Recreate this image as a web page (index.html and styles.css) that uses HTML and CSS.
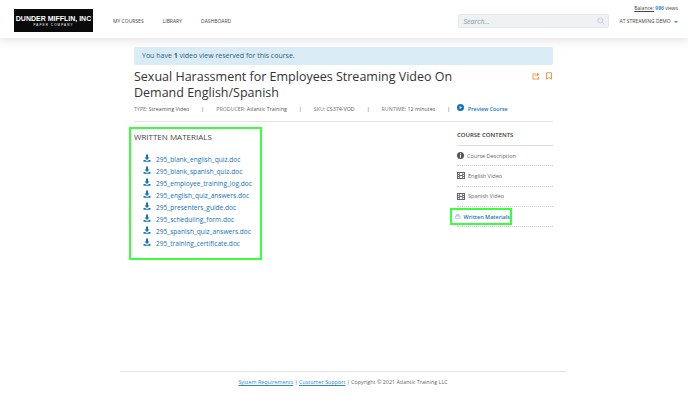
FILE: index.html
```html
<!DOCTYPE html>
<html lang="en">
<head>
  <meta charset="UTF-8" />
  <title>Sexual Harassment for Employees Streaming Video On Demand</title>
  <link rel="stylesheet" href="styles.css">
</head>
<body>

<header class="topbar">
  <div class="logo">
    <span class="logo-name">DUNDER MIFFLIN, INC</span>
    <span class="logo-sub">PAPER COMPANY</span>
  </div>
  <nav class="nav">
    <a href="#">MY COURSES</a>
    <a href="#">LIBRARY</a>
    <a href="#">DASHBOARD</a>
  </nav>
  <div class="topbar-right">
    <div class="balance"><u>Balance:</u> <b>986</b> views</div>
    <div class="topbar-tools">
      <div class="search">
        <span>Search...</span>
        <svg viewBox="0 0 16 16" width="8" height="8" fill="none" stroke="#b9c2c9" stroke-width="1.4"><circle cx="6.5" cy="6.5" r="5"/><path d="M10.5 10.5 15 15"/></svg>
      </div>
      <div class="account">AT STREAMING DEMO <i class="caret"></i></div>
    </div>
  </div>
</header>

<main class="content">
  <div class="alert">You have <b>1</b> video view reserved for this course.</div>

  <div class="title-row">
    <h1>Sexual Harassment for Employees Streaming Video On Demand English/Spanish</h1>
    <div class="title-icons">
      <svg viewBox="0 0 16 16" width="8" height="8" fill="#f0994a"><path d="M1 3h7v2H3v8h9v-3h2v5H1z"/><path d="M10 1l5 4-5 4V7C8 7 6.500 8 6 10c0-3 1-5 4-5.500z"/></svg>
      <svg viewBox="0 0 16 16" width="8" height="8" fill="none" stroke="#f0994a" stroke-width="2"><path d="M3 1.500h10v13L8 11l-5 3.500z"/></svg>
    </div>
  </div>

  <div class="meta">
    <span><em>TYPE:</em> Streaming Video</span>
    <span class="sep">|</span>
    <span><em>PRODUCER:</em> Atlantic Training</span>
    <span class="sep">|</span>
    <span><em>SKU:</em> CS374-VOD</span>
    <span class="sep">|</span>
    <span><em>RUNTIME:</em> 12 minutes</span>
    <span class="sep">|</span>
    <a class="preview" href="#">
      <svg viewBox="0 0 16 16" width="7" height="7"><circle cx="8" cy="8" r="8" fill="#1573b9"/><path d="M6 4.500 11.500 8 6 11.500z" fill="#fff"/></svg>
      Preview Course
    </a>
  </div>

  <div class="columns">
    <section class="materials">
      <h2>WRITTEN MATERIALS</h2>
      <ul class="files">
        <li><svg class="dl" viewBox="0 0 16 16"><path d="M6 1h4v6h3l-5 5-5-5h3z"/><path d="M1 12h3l2 1.500h4l2-1.500h3v3.500H1z"/></svg><a href="#">295_blank_english_quiz.doc</a></li>
        <li><svg class="dl" viewBox="0 0 16 16"><path d="M6 1h4v6h3l-5 5-5-5h3z"/><path d="M1 12h3l2 1.500h4l2-1.500h3v3.500H1z"/></svg><a href="#">295_blank_spanish_quiz.doc</a></li>
        <li><svg class="dl" viewBox="0 0 16 16"><path d="M6 1h4v6h3l-5 5-5-5h3z"/><path d="M1 12h3l2 1.500h4l2-1.500h3v3.500H1z"/></svg><a href="#">295_employee_training_log.doc</a></li>
        <li><svg class="dl" viewBox="0 0 16 16"><path d="M6 1h4v6h3l-5 5-5-5h3z"/><path d="M1 12h3l2 1.500h4l2-1.500h3v3.500H1z"/></svg><a href="#">295_english_quiz_answers.doc</a></li>
        <li><svg class="dl" viewBox="0 0 16 16"><path d="M6 1h4v6h3l-5 5-5-5h3z"/><path d="M1 12h3l2 1.500h4l2-1.500h3v3.500H1z"/></svg><a href="#">295_presenters_guide.doc</a></li>
        <li><svg class="dl" viewBox="0 0 16 16"><path d="M6 1h4v6h3l-5 5-5-5h3z"/><path d="M1 12h3l2 1.500h4l2-1.500h3v3.500H1z"/></svg><a href="#">295_scheduling_form.doc</a></li>
        <li><svg class="dl" viewBox="0 0 16 16"><path d="M6 1h4v6h3l-5 5-5-5h3z"/><path d="M1 12h3l2 1.500h4l2-1.500h3v3.500H1z"/></svg><a href="#">295_spanish_quiz_answers.doc</a></li>
        <li><svg class="dl" viewBox="0 0 16 16"><path d="M6 1h4v6h3l-5 5-5-5h3z"/><path d="M1 12h3l2 1.500h4l2-1.500h3v3.500H1z"/></svg><a href="#">295_training_certificate.doc</a></li>
      </ul>
    </section>

    <aside class="contents">
      <h3>COURSE CONTENTS</h3>
      <div class="item">
        <svg viewBox="0 0 16 16" width="7" height="7"><circle cx="8" cy="8" r="8" fill="#555"/><rect x="6.800" y="7" width="2.400" height="6" fill="#fff"/><rect x="6.800" y="3" width="2.400" height="2.400" fill="#fff"/></svg>
        Course Description
      </div>
      <div class="item">
        <svg viewBox="0 0 16 14" width="8" height="7"><path fill="#666" fill-rule="evenodd" d="M0 0h16v14H0zM2 2v2h2V2zm0 4v2h2V6zm0 4v2h2v-2zm10-8v2h2V2zm0 4v2h2V6zm0 4v2h2v-2zM5.500 2v4h5V2zm0 6v4h5V8z"/></svg>
        English Video
      </div>
      <div class="item">
        <svg viewBox="0 0 16 14" width="8" height="7"><path fill="#666" fill-rule="evenodd" d="M0 0h16v14H0zM2 2v2h2V2zm0 4v2h2V6zm0 4v2h2v-2zm10-8v2h2V2zm0 4v2h2V6zm0 4v2h2v-2zM5.500 2v4h5V2zm0 6v4h5V8z"/></svg>
        Spanish Video
      </div>
      <div class="item current">
        <span class="current-box">
          <svg viewBox="0 0 16 14" width="8" height="7" fill="none" stroke="#4a9ad4" stroke-width="1.200"><path d="M1 6h14v7H1zM4 6V3h8v3M6 3V1h4v2"/></svg>
          Written Materials
        </span>
      </div>
    </aside>
  </div>
</main>

<footer class="footer">
  <a href="#">System Requirements</a> | <a href="#">Customer Support</a> | Copyright © 2021 Atlantic Training LLC
</footer>

</body>
</html>
```

FILE: styles.css
```css
body {
  font-family: "Open Sans", sans-serif;
  background: #fff;
  color: #555;
  margin: 0;
  height: 405px;
  overflow: hidden;
}

a {
  color: #1573b9;
  text-decoration: none;
}

.topbar {
  height: 38px;
  display: flex;
  align-items: flex-start;
  padding: 0 10px 0 14px;
  box-shadow: 0 2px 10px rgba(0,0,0,0.12);
  box-sizing: border-box;
}

.logo {
  width: 79px;
  height: 23px;
  margin-top: 9px;
  background: #0a0a0a;
  color: #fff;
  display: flex;
  flex-direction: column;
  align-items: center;
  justify-content: center;
  font-family: "Liberation Sans", sans-serif;
  flex-shrink: 0;
}

.logo-name {
  font-size: 7px;
  font-weight: bold;
  line-height: 9px;
  white-space: nowrap;
}

.logo-sub {
  font-size: 3px;
  letter-spacing: 1.1px;
  line-height: 5px;
}

.nav {
  display: flex;
  gap: 19px;
  margin: 18px 0 0 20px;
  font-size: 5px;
  line-height: 7px;
}

.nav a {
  color: #444;
}

.topbar-right {
  margin-left: auto;
  display: flex;
  flex-direction: column;
  align-items: flex-end;
}

.balance {
  font-size: 5px;
  line-height: 7px;
  margin-top: 5px;
  color: #444;
}

.balance b {
  color: #3b8fd0;
}

.topbar-tools {
  display: flex;
  align-items: center;
  margin-top: 2px;
}

.search {
  width: 141px;
  height: 12px;
  background: #eef2f5;
  border: 1px solid #e2e7ea;
  border-radius: 2px;
  display: flex;
  align-items: center;
  justify-content: space-between;
  padding: 0 3px 0 5px;
  font-size: 7px;
  font-style: italic;
  color: #8a949b;
  box-sizing: content-box;
  margin-right: 11px;
}

.search span {
  margin-right: auto;
}

.account {
  font-size: 5px;
  color: #444;
  white-space: nowrap;
}

.caret {
  display: inline-block;
  border: 2px solid transparent;
  border-top-color: #3b8fd0;
  border-bottom: 0;
  margin-left: 2px;
  vertical-align: middle;
}

.content {
  width: 419px;
  margin: 9px 0 0 134px;
}

.alert {
  background: #d9ebf5;
  color: #2b5f7c;
  border-radius: 2px;
  height: 18px;
  line-height: 18px;
  padding: 0 8px;
  font-size: 7px;
}

.title-row {
  display: flex;
  justify-content: space-between;
  margin-top: 4px;
}

h1 {
  font-size: 12.500px;
  font-weight: 400;
  line-height: 16px;
  color: #333;
  margin: 0;
  width: 370px;
}

.title-icons {
  display: flex;
  gap: 5px;
  margin-top: 3px;
  height: 8px;
}

.meta {
  display: flex;
  align-items: center;
  font-size: 5.300px;
  line-height: 8px;
  margin-top: 4px;
  padding-bottom: 8px;
  border-bottom: 1px solid #e4e4e4;
  color: #555;
}

.meta em {
  font-style: normal;
  color: #777;
}

.sep {
  margin: 0 12px;
}

.sep:nth-last-child(2) {
  margin-right: 7px;
}

.preview {
  display: flex;
  align-items: center;
  gap: 4px;
  font-weight: 600;
}

.preview svg {
  margin-top: -3px;
}

.columns {
  display: flex;
  justify-content: space-between;
  margin-top: 5px;
}

.materials {
  width: 133px;
  height: 133px;
  margin-left: -5px;
  border: 2px solid #39ff3c;
  box-sizing: border-box;
  padding: 2px 3px;
}

h2 {
  font-size: 8px;
  font-weight: 400;
  line-height: 11px;
  color: #444;
  margin: 0;
}

.files {
  list-style: none;
  margin: 11px 0 0;
  padding: 0 0 0 9px;
}

.files li {
  height: 12.100px;
  display: flex;
  align-items: center;
  font-size: 6.600px;
}

.dl {
  width: 8px;
  height: 8px;
  fill: #1573b9;
  margin: -3px 5px 0 0;
}

.contents {
  width: 96px;
}

h3 {
  font-size: 6px;
  font-weight: 600;
  line-height: 8px;
  color: #333;
  margin: 4px 0 0;
  padding-bottom: 6px;
  border-bottom: 1px solid #ddd;
}

.item {
  height: 20.300px;
  box-sizing: border-box;
  display: flex;
  align-items: center;
  gap: 3px;
  font-size: 5.500px;
  color: #666;
  border-bottom: 1px dotted #ccc;
}

.current {
  color: #1573b9;
  font-weight: 600;
}

.current-box {
  display: flex;
  align-items: center;
  gap: 3px;
  border: 2px solid #39ff3c;
  box-sizing: border-box;
  height: 17px;
  width: 62px;
  margin-left: -7px;
  padding-left: 3px;
  white-space: nowrap;
}

.footer {
  position: absolute;
  top: 371px;
  left: 120px;
  width: 446px;
  border-top: 1px solid #e4e4e4;
  padding-top: 6px;
  text-align: center;
  font-size: 5.400px;
  line-height: 8px;
  color: #666;
}

.footer a {
  color: #2f86c7;
  text-decoration: underline;
}
```
